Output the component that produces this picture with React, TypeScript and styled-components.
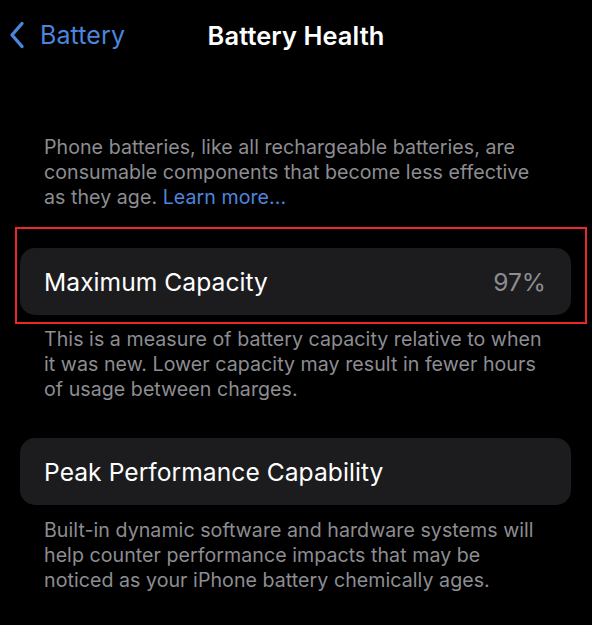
import React from "react";
import styled, { createGlobalStyle } from "styled-components";

const Global = createGlobalStyle`
  html, body { margin: 0; padding: 0; background: #000; }
  body { font-family: Inter, "Noto Sans", "Liberation Sans", sans-serif; -webkit-font-smoothing: antialiased; }
`;

const Page = styled.div`
  width: 592px;
  height: 625px;
  background: #000;
  overflow: hidden;
  display: flex;
  flex-direction: column;
`;

const NavBar = styled.div`
  height: 70px;
  display: grid;
  grid-template-columns: 1fr auto 1fr;
  align-items: center;
`;

const BackButton = styled.div`
  display: flex;
  align-items: center;
  gap: 15px;
  padding-left: 9px;
  color: #4d85dd;
  font-size: 25px;
  letter-spacing: 0.1px;
`;

const Title = styled.div`
  color: #fff;
  font-size: 25.4px;
  font-weight: 600;
  letter-spacing: 0.1px;
`;

const Text = styled.p<{ $top: number }>`
  margin: ${(p) => p.$top}px 0 0 44px;
  color: #8d8d92;
  font-size: 19.6px;
  line-height: 25px;
  letter-spacing: 0.05px;
`;

const Link = styled.span`
  color: #4d85dd;
`;

const Highlight = styled.div`
  margin: 17px 5px 0 15px;
  border: 2px solid #e8282b;
  padding: 19px 14px 7px 3px;
`;

const Card = styled.div<{ $top?: number }>`
  margin: ${(p) => (p.$top !== undefined ? `${p.$top}px 21px 0 20px` : "0")};
  height: 67px;
  border-radius: 15px;
  background: #1c1c1e;
  display: flex;
  align-items: center;
  justify-content: space-between;
  padding: 0 25px 0 24px;
`;

const Label = styled.span`
  color: #fff;
  font-size: 24.6px;
  letter-spacing: 0.05px;
`;

const Value = styled.span`
  color: #8d8d92;
  font-size: 24.6px;
`;

export default function App() {
  return (
    <>
      <Global />
      <Page>
        <NavBar>
          <BackButton>
            <svg width="16" height="28" viewBox="0 0 16 28" fill="none">
              <polyline
                points="13,2.5 3,14 13,25.5"
                stroke="#4d85dd"
                strokeWidth="3.4"
                strokeLinecap="round"
                strokeLinejoin="round"
              />
            </svg>
            Battery
          </BackButton>
          <Title>Battery Health</Title>
          <div />
        </NavBar>
        <Text $top={65}>
          Phone batteries, like all rechargeable batteries, are
          <br />
          consumable components that become less effective
          <br />
          as they age. <Link>Learn more...</Link>
        </Text>
        <Highlight>
          <Card>
            <Label>Maximum Capacity</Label>
            <Value>97%</Value>
          </Card>
        </Highlight>
        <Text $top={3}>
          This is a measure of battery capacity relative to when
          <br />
          it was new. Lower capacity may result in fewer hours
          <br />
          of usage between charges.
        </Text>
        <Card $top={36}>
          <Label>Peak Performance Capability</Label>
          <span />
        </Card>
        <Text $top={13}>
          Built-in dynamic software and hardware systems will
          <br />
          help counter performance impacts that may be
          <br />
          noticed as your iPhone battery chemically ages.
        </Text>
      </Page>
    </>
  );
}
